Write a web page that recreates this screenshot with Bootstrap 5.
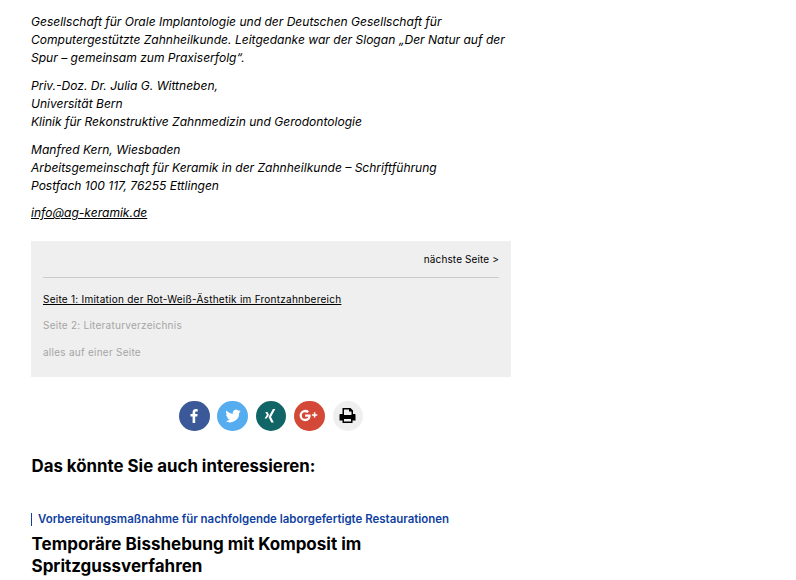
<!DOCTYPE html>
<html lang="de">
<head>
<meta charset="utf-8">
<title>Artikel</title>
<link rel="stylesheet" href="https://cdn.jsdelivr.net/npm/bootstrap@5.3.0/dist/css/bootstrap.min.css">
<style>
html,body{height:580px;overflow:hidden;background:#fff}
body{font-family:Inter,"Noto Sans",sans-serif;color:#000}
.page-col{width:480px;margin-left:31px;padding-top:13px}
.art-text{font-size:12.05px;font-style:italic;line-height:18.2px;margin:0 0 9.2px;white-space:nowrap}
.art-text a{color:#000}
.pager-box{background:#efefef;padding:11px 12px 12px;height:136px;margin-top:18px;font-size:10px;letter-spacing:.25px}
.pager-next{color:#000;text-decoration:none;line-height:13px;letter-spacing:.12px}
.pager-rule{border-top:1px solid #ccc;margin:10px 0 15px}
.pager-item{display:block;line-height:13px;margin-bottom:13.5px;color:#a5a5a5;text-decoration:none}
.pager-item.is-on{color:#000;text-decoration:underline}
.share-row{gap:7.9px;margin-top:24px;padding-left:148px}
.share-dot{width:30.5px;height:30.5px;border-radius:50%;display:flex;align-items:center;justify-content:center;flex:none}
.sh-fb{background:#3b5998}.sh-tw{background:#55acee}.sh-xi{background:#126567}.sh-gp{background:#d34836}.sh-pr{background:#efefef}
.more-title{font-size:16.85px;font-weight:700;line-height:22px;margin:24px 0 0;padding-left:.5px;color:#000}
.kicker{font-size:11.46px;font-weight:600;color:#0f3f9f;border-left:1px solid #0f3f9f;padding-left:6px;line-height:13px;margin-top:36px}
.teaser-title{font-size:17px;font-weight:700;line-height:22px;margin:7px 0 0;padding-left:.5px;color:#000}
</style>
</head>
<body>
<div class="page-col">
  <p class="art-text">Gesellschaft für Orale Implantologie und der Deutschen Gesellschaft für<br>Computergestützte Zahnheilkunde. Leitgedanke war der Slogan „Der Natur auf der<br>Spur – gemeinsam zum Praxiserfolg“.</p>
  <p class="art-text">Priv.-Doz. Dr. Julia G. Wittneben,<br>Universität Bern<br>Klinik für Rekonstruktive Zahnmedizin und Gerodontologie</p>
  <p class="art-text">Manfred Kern, Wiesbaden<br>Arbeitsgemeinschaft für Keramik in der Zahnheilkunde – Schriftführung<br>Postfach 100 117, 76255 Ettlingen</p>
  <p class="art-text"><a href="#">info@ag-keramik.de</a></p>
  <div class="pager-box">
    <div class="text-end"><a class="pager-next" href="#">nächste Seite &gt;</a></div>
    <div class="pager-rule"></div>
    <a class="pager-item is-on" href="#">Seite 1: Imitation der Rot-Weiß-Ästhetik im Frontzahnbereich</a>
    <a class="pager-item" href="#">Seite 2: Literaturverzeichnis</a>
    <a class="pager-item" href="#">alles auf einer Seite</a>
  </div>
  <div class="d-flex share-row">
    <a class="share-dot sh-fb" href="#"><svg width="16" height="16" viewBox="0 0 16 16"><path fill="#fff" d="M9.2 15V8.6h2.1l.3-2.5H9.2V4.6c0-.7.2-1.2 1.2-1.2h1.3V1.2C11.5 1.1 10.700 1 9.800 1 7.900 1 6.600 2.200 6.600 4.300v1.800H4.500v2.500h2.100V15z"/></svg></a>
    <a class="share-dot sh-tw" href="#"><svg width="16" height="16" viewBox="0 0 24 24"><path fill="#fff" d="M23.500 4.900c-.8.400-1.700.6-2.700.8 1-.6 1.700-1.500 2.100-2.600-.9.500-1.900.9-3 1.100A4.700 4.700 0 0 0 11.800 8.500C7.900 8.300 4.400 6.400 2.100 3.600c-1.300 2.100-.6 4.900 1.400 6.300-.8 0-1.500-.2-2.100-.6 0 2.300 1.600 4.300 3.800 4.700-.7.200-1.400.2-2.100.1.600 1.900 2.300 3.200 4.400 3.300A9.500 9.500 0 0 1 .5 19.300 13.400 13.400 0 0 0 21.100 7.400c.9-.7 1.700-1.500 2.400-2.500z"/></svg></a>
    <a class="share-dot sh-xi" href="#"><svg width="16" height="16" viewBox="0 0 16 16"><path fill="#fff" d="M12.300 1H9.900L5.500 8.900 8.300 14.500h2.500L8 8.900zM4.400 4H2.300L3.900 6.800 1.600 10.500h2.100L6 6.800z"/></svg></a>
    <a class="share-dot sh-gp" href="#"><svg width="20" height="13" viewBox="0 0 22 14"><path fill="#fff" d="M6.800 6v2.500h3.500c-.3 1.300-1.500 2.200-3.500 2.200a3.700 3.700 0 0 1 0-7.400c1 0 1.800.4 2.400.9l1.800-1.800A6.200 6.200 0 1 0 6.800 13.200c3.700 0 6-2.600 6-6.200 0-.4 0-.7-.1-1zM18 5.500V3.400h-1.700v2.100h-2.100v1.700h2.100v2.100H18V7.200h2.100V5.500z"/></svg></a>
    <a class="share-dot sh-pr" href="#"><svg width="17" height="17" viewBox="0 0 17 17"><path fill-rule="evenodd" fill="#000" d="M3.500 1h8L14 3.500V7h1.500c.6 0 1 .4 1 1v5.500h-3V16h-10v-2.500H.5V8c0-.6.4-1 1-1h2zM5 2.500V8h7.500V4.500H10V2.500zM5 12v2.500h7V12z"/></svg></a>
  </div>
  <h2 class="more-title">Das könnte Sie auch interessieren:</h2>
  <div class="kicker">Vorbereitungsmaßnahme für nachfolgende laborgefertigte Restaurationen</div>
  <h3 class="teaser-title">Temporäre Bisshebung mit Komposit im<br>Spritzgussverfahren</h3>
</div>
<script src="https://cdn.jsdelivr.net/npm/bootstrap@5.3.0/dist/js/bootstrap.bundle.min.js"></script>
</body>
</html>
